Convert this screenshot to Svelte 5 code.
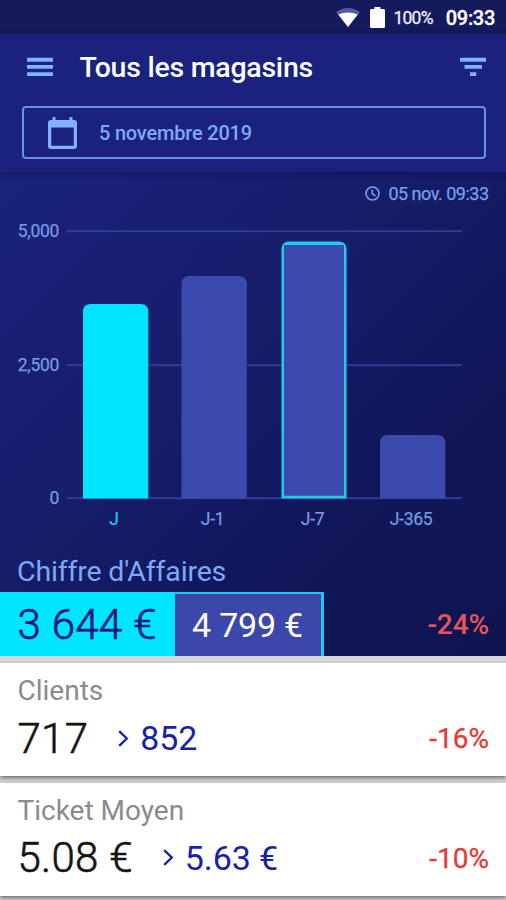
<script>
  const bars = [
    { label: 'J', x: 83, top: 304, kind: 'current' },
    { label: 'J-1', x: 181.5, top: 276, kind: '' },
    { label: 'J-7', x: 281.5, top: 241.5, kind: 'compared' },
    { label: 'J-365', x: 380, top: 435, kind: '' }
  ];
  const ticks = [
    { label: '5,000', y: 231 },
    { label: '2,500', y: 365 },
    { label: '0', y: 498 }
  ];
  const cards = [
    { title: 'Clients', value: '717', previous: '852', change: '-16%' },
    { title: 'Ticket Moyen', value: '5.08 €', previous: '5.63 €', change: '-10%' }
  ];
  const base = 498.5;
  const barPath = (x, y, w, r) =>
    `M${x} ${base}V${y + r}Q${x} ${y} ${x + r} ${y}H${x + w - r}Q${x + w} ${y} ${x + w} ${y + r}V${base}Z`;
</script>

<div class="screen">
  <div class="status">
    <svg class="wifi" width="24" height="20" viewBox="0 0 24 20">
      <path d="M0 4.2Q12-4 24 4.2L12 19Z" fill="#555c9c" />
      <path d="M2.300 6.600Q12 2.500 21.700 6.600L12 19Z" fill="#fff" />
    </svg>
    <svg class="battery" width="15" height="21" viewBox="0 0 15 21">
      <path d="M4.4 0h6v2H13.500q1.500 0 1.500 1.500V19.500q0 1.500-1.500 1.500H1.500Q0 21 0 19.500V3.500Q0 2 1.500 2H4.400Z" fill="#fff" />
    </svg>
    <span class="percent">100%</span>
    <span class="time">09:33</span>
  </div>

  <header>
    <div class="toolbar">
      <svg width="26" height="20" viewBox="0 0 26 20" fill="#82b1ff">
        <path d="M0 .8h26v4H0zM0 8h26v3.800H0zM0 15.200h26v3.800H0z" />
      </svg>
      <h1>Tous les magasins</h1>
      <svg width="26" height="20" viewBox="0 0 26 20" fill="#82b1ff">
        <path d="M0 .8h26v4H0zM4.500 8h17.500v3.800H4.500zM10 15.200h6.300v3.800H10z" />
      </svg>
    </div>
    <div class="date">
      <svg width="29" height="32" viewBox="0 0 29 32">
        <path fill="#82b1ff" fill-rule="evenodd" d="M4.500 0H7.500V3H21.500V0H24.500V3H26Q29 3 29 6V29Q29 32 26 32H3Q0 32 0 29V6Q0 3 3 3H4.500ZM3.300 10.500V28.700H25.700V10.500Z" />
      </svg>
      <span>5 novembre 2019</span>
    </div>
  </header>

  <section class="sales">
    <div class="updated">
      <svg width="15" height="15" viewBox="0 0 15 15" fill="none" stroke="#769fec" stroke-width="1.600">
        <circle cx="7.500" cy="7.500" r="6.500" />
        <path d="M7.200 3.500V7.700L10.500 10" />
      </svg>
      <span>05 nov. 09:33</span>
    </div>
    <svg class="chart" width="506" height="330" viewBox="0 210 506 330">
      {#each ticks as tick}
        <rect x="66.500" y={tick.y - 0.8} width="395.500" height="2" fill="#303c92" />
        <text x="59" y={tick.y + 6} text-anchor="end" class="tick">{tick.label}</text>
      {/each}
      {#each bars as bar}
        {#if bar.kind === 'compared'}
          <path d={barPath(bar.x, bar.top, 65, 8)} fill="#1fcdea" />
          <path d="M284 495.800V245H344V495.800Z" fill="#3c4aad" />
        {:else}
          <path d={barPath(bar.x, bar.top, 65.3, 8)} fill={bar.kind === 'current' ? '#00e5ff' : '#3c4aad'} />
        {/if}
        <text x={bar.x + 31} y="525" text-anchor="middle" class="tick" class:active={bar.kind === 'current'}>{bar.label}</text>
      {/each}
    </svg>
    <h2>Chiffre d'Affaires</h2>
    <div class="totals">
      <span class="today">3 644 €</span>
      <span class="before">4 799 €</span>
      <span class="change">-24%</span>
    </div>
  </section>

  {#each cards as card}
    <section class="card">
      <h3>{card.title}</h3>
      <div class="figures">
        <span class="value">{card.value}</span>
        <svg width="11" height="17" viewBox="0 0 11 17" fill="none" stroke="#1a1fa8" stroke-width="2.300">
          <path d="M1.200 1.200L8.800 8.500L1.200 15.800" />
        </svg>
        <span class="previous">{card.previous}</span>
        <span class="change">{card.change}</span>
      </div>
    </section>
  {/each}
</div>

<style>
  .screen {
    width: 506px;
    height: 900px;
    overflow: hidden;
    background: #d5d7d8;
    font-family: Roboto, sans-serif;
    white-space: nowrap;
  }
  h1, h2, h3 { margin: 0; }
  svg { display: block; flex: none; }
  .status {
    box-sizing: border-box;
    height: 34px;
    padding-right: 11px;
    display: flex;
    align-items: center;
    justify-content: flex-end;
    background: #141a5c;
    color: #fff;
  }
  .wifi { margin: 1px 10px 0 0; }
  .battery { margin-right: 8px; }
  .percent { font-size: 17.500px; margin: 2px 13px 0 0; color: #eceefa; letter-spacing: -.75px; -webkit-text-stroke: .3px; }
  .time { font-size: 20px; font-weight: 500; margin-top: 2px; letter-spacing: -.3px; -webkit-text-stroke: .3px; }
  header {
    position: relative;
    box-sizing: border-box;
    height: 138px;
    background: #1b227e;
    box-shadow: 0 1px 5px rgba(10, 14, 60, .5);
  }
  .toolbar {
    height: 72px;
    padding: 0 20px 6px 27px;
    box-sizing: border-box;
    display: flex;
    align-items: center;
  }
  h1 {
    flex: 1;
    margin: 2px 0 0 26.500px;
    color: #fff;
    font-size: 28.500px;
    font-weight: 500;
    line-height: 34px;
    letter-spacing: -.25px;
  }
  .date {
    box-sizing: border-box;
    height: 53px;
    margin: 0 20.500px 0 21.500px;
    padding-left: 24.500px;
    border: 2px solid #6890e8;
    border-radius: 4px;
    display: flex;
    align-items: center;
    gap: 22px;
    color: #7ea9f8;
    font-size: 20px;
    font-weight: 500;
    letter-spacing: -.2px;
  }
  .sales {
    height: 484px;
    background: linear-gradient(135deg, #1b227c 0%, #161d6a 40%, #11175a 68%, #0f144f 100%);
    display: flex;
    flex-direction: column;
  }
  .updated {
    height: 38px;
    padding: 4px 17.500px 0 0;
    box-sizing: border-box;
    display: flex;
    align-items: center;
    justify-content: flex-end;
    gap: 8px;
    color: #769fec;
    font-size: 18px;
    letter-spacing: -.5px;
    -webkit-text-stroke: .25px;
  }
  .tick { font-size: 17.500px; fill: #7799e0; letter-spacing: -.3px; stroke: #7799e0; stroke-width: .25px; }
  .active { fill: #19c9e8; stroke: #19c9e8; }
  h2 {
    height: 52px;
    padding-left: 17px;
    color: #7ea9f4;
    font-size: 28.500px;
    font-weight: 400;
    line-height: 63px;
    letter-spacing: -.16px;
  }
  .totals {
    height: 64px;
    display: flex;
    line-height: 66px;
  }
  .today {
    width: 175px;
    padding-left: 17.500px;
    box-sizing: border-box;
    background: #00e5ff;
    color: #101a80;
    font-size: 42px;
    font-weight: 300;
    letter-spacing: .3px;
    -webkit-text-stroke: .7px;
  }
  .before {
    width: 148.500px;
    padding-left: 17px;
    box-sizing: border-box;
    border: solid #1fc8e8;
    border-width: 2px 3px 0 0;
    background: #3c47aa;
    color: #fff;
    font-size: 34px;
    line-height: 62px;
    letter-spacing: -.2px;
  }
  .change {
    margin: 1px 17px 0 auto;
    color: #e53935;
    font-size: 28px;
    font-weight: 400;
    -webkit-text-stroke: .3px;
  }
  .totals .change {
    margin-top: 0;
    color: #e85558;
    font-weight: 500;
    letter-spacing: -.1px;
    -webkit-text-stroke: 0;
  }
  .card {
    height: 113px;
    margin-top: 7px;
    box-sizing: border-box;
    padding: 11px 0 0 17.500px;
    background: #fff;
    box-shadow: 0 2px 4px rgba(0, 0, 0, .5);
  }
  .card + .card { margin-top: 6.500px; }
  h3 {
    color: #8b8b8b;
    font-size: 28px;
    font-weight: 400;
    line-height: 34px;
  }
  .figures {
    height: 60px;
    display: flex;
    align-items: center;
  }
  .value { color: #141414; font-size: 42px; font-weight: 300; letter-spacing: .3px; -webkit-text-stroke: .6px; }
  .figures svg { margin: 0 11px 0 30px; }
  .previous { color: #1a1fa8; font-size: 34px; letter-spacing: -.1px; }
</style>
